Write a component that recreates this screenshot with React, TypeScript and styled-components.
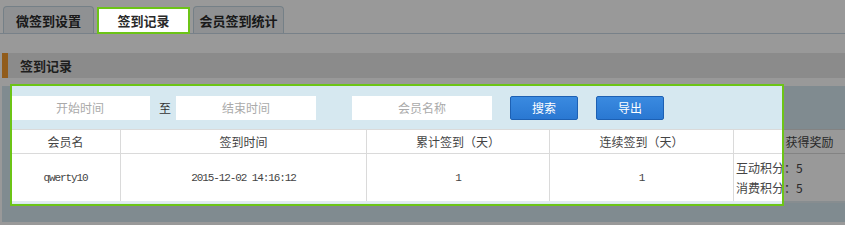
import styled, { createGlobalStyle } from 'styled-components';

const GlobalStyle = createGlobalStyle`
  body {
    margin: 0;
    background: #fff;
    font-family: 'Noto Sans CJK SC', 'Noto Sans', sans-serif;
    color: #333;
  }
`;

const records = [
  {
    name: 'qwerty10',
    time: '2015-12-02 14:16:12',
    total: 1,
    streak: 1,
    rewards: ['互动积分：5', '消费积分：5'],
  },
];

function App() {
  return (
    <Viewport>
      <GlobalStyle />
      <Page>
        <TabBar>
          <Tab>微签到设置</Tab>
          <Tab $active>签到记录</Tab>
          <Tab>会员签到统计</Tab>
        </TabBar>

        <SectionTitle>签到记录</SectionTitle>

        <Panel>
          <SearchRow>
            <SearchInput placeholder="开始时间" />
            <RangeLabel>至</RangeLabel>
            <SearchInput placeholder="结束时间" />
            <SearchInput placeholder="会员名称" $gap={36} />
            <ActionButton>搜索</ActionButton>
            <ActionButton>导出</ActionButton>
          </SearchRow>

          <Table>
            <colgroup>
              <col style={{ width: 110 }} />
              <col style={{ width: 246 }} />
              <col style={{ width: 183 }} />
              <col style={{ width: 184 }} />
              <col style={{ width: 152 }} />
            </colgroup>
            <thead>
              <tr>
                <HeadCell>会员名</HeadCell>
                <HeadCell>签到时间</HeadCell>
                <HeadCell>累计签到（天）</HeadCell>
                <HeadCell>连续签到（天）</HeadCell>
                <HeadCell>获得奖励</HeadCell>
              </tr>
            </thead>
            <tbody>
              {records.map((r) => (
                <tr key={r.name + r.time}>
                  <Cell $mono>{r.name}</Cell>
                  <Cell $mono>{r.time}</Cell>
                  <Cell $mono>{r.total}</Cell>
                  <Cell $mono>{r.streak}</Cell>
                  <RewardCell>
                    {r.rewards.map((line) => (
                      <div key={line}>{line}</div>
                    ))}
                  </RewardCell>
                </tr>
              ))}
            </tbody>
          </Table>
        </Panel>
      </Page>

      <Spotlight />
    </Viewport>
  );
}

const Viewport = styled.div`
  position: relative;
  overflow: hidden;
  width: 100%;
  min-height: 100vh;
`;

const Page = styled.div`
  width: 895px;
`;

const TabBar = styled.div`
  display: flex;
  align-items: flex-end;
  gap: 3px;
  height: 27px;
  padding: 6px 0 0 3px;
  border-bottom: 1px solid #c8d8e4;
`;

const Tab = styled.div<{ $active?: boolean }>`
  box-sizing: border-box;
  display: flex;
  align-items: center;
  justify-content: center;
  width: ${(p) => (p.$active ? 93 : 91)}px;
  height: 27px;
  font-size: 13px;
  font-weight: bold;
  color: #2a2a2a;
  background: ${(p) => (p.$active ? '#fff' : '#eef2f6')};
  border: ${(p) => (p.$active ? '2px solid #6cc417' : '1px solid #c4d6e2')};
  border-bottom: ${(p) => (p.$active ? '2px solid #6cc417' : 'none')};
  border-radius: ${(p) => (p.$active ? '0' : '4px 4px 0 0')};
  margin-bottom: ${(p) => (p.$active ? '-1px' : '0')};
  position: relative;
  z-index: ${(p) => (p.$active ? 20 : 'auto')};
`;

const SectionTitle = styled.div`
  margin: 19px 0 0 2px;
  height: 25px;
  line-height: 25px;
  padding-left: 12px;
  background: #e8e8e8;
  border-left: 6px solid #f29a2e;
  font-size: 13px;
  font-weight: bold;
  color: #333;
`;

const Panel = styled.div`
  margin: 8px 0 0 2px;
  padding: 0 8px 19px;
  background: #d6e8f0;
`;

const SearchRow = styled.div`
  display: flex;
  align-items: center;
  height: 43px;
`;

const SearchInput = styled.input<{ $gap?: number }>`
  box-sizing: border-box;
  width: 140px;
  height: 24px;
  margin-left: ${(p) => p.$gap ?? 0}px;
  border: none;
  outline: none;
  background: #fff;
  text-align: center;
  font-family: inherit;
  font-size: 12px;
  color: #333;

  &::placeholder {
    color: #aaa;
  }
`;

const RangeLabel = styled.span`
  margin: 0 5px 0 9px;
  font-size: 12px;
  color: #333;
`;

const ActionButton = styled.button`
  box-sizing: border-box;
  width: 68px;
  height: 24px;
  margin-left: 18px;
  border: 1px solid #1d60b3;
  border-radius: 2px;
  background: linear-gradient(#3a8ae0, #2a78d2);
  color: #fff;
  font-family: inherit;
  font-size: 12px;
  padding: 0;
`;

const Table = styled.table`
  width: 875px;
  table-layout: fixed;
  border-collapse: collapse;
  background: #fff;
  border-bottom: 2px solid #e2ebf0;
`;

const HeadCell = styled.th`
  height: 23px;
  padding: 0;
  border: 1px solid #dadada;
  font-size: 12px;
  font-weight: normal;
  color: #444;
  text-align: center;
`;

const Cell = styled.td<{ $mono?: boolean }>`
  height: 47px;
  padding: 0;
  border: 1px solid #dadada;
  text-align: center;
  color: #444;
  font-family: ${(p) => (p.$mono ? "'Liberation Mono', monospace" : 'inherit')};
  font-size: ${(p) => (p.$mono ? '11px' : '12px')};
  letter-spacing: ${(p) => (p.$mono ? '-1.1px' : '0')};
`;

const RewardCell = styled.td`
  padding: 0 0 0 2px;
  border: 1px solid #dadada;
  text-align: left;
  font-size: 12px;
  line-height: 20px;
  color: #444;
`;

const Spotlight = styled.div`
  position: absolute;
  left: 10px;
  top: 84px;
  width: 774px;
  height: 122px;
  box-sizing: border-box;
  border: 2px solid #6cc417;
  box-shadow: 0 0 0 3000px rgba(0, 0, 0, 0.4);
  pointer-events: none;
  z-index: 10;
`;

export default App;
